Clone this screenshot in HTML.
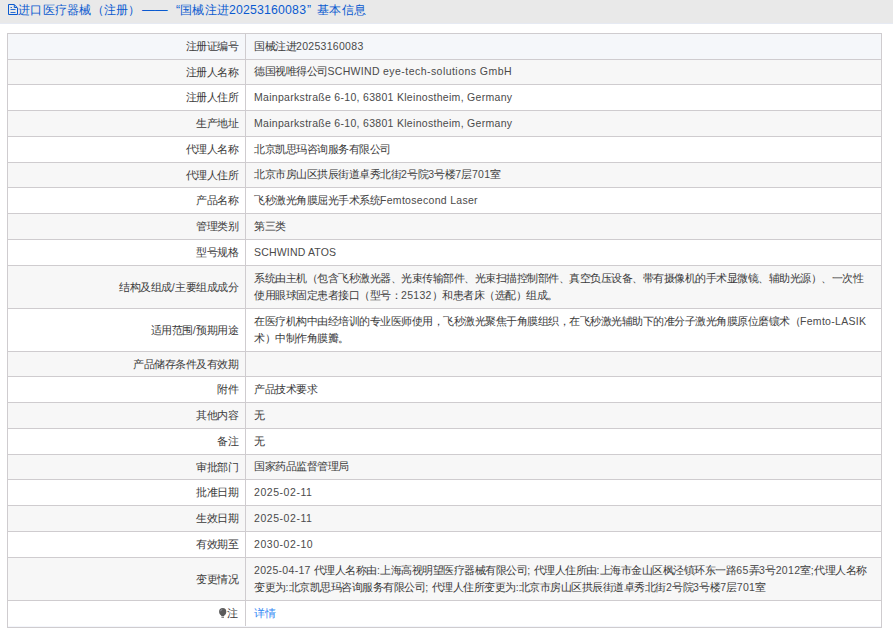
<!DOCTYPE html>
<html><head><meta charset="utf-8"><style>
html,body{margin:0;padding:0;background:#fff;width:893px;height:633px;overflow:hidden;font-family:"Liberation Sans",sans-serif;}
.hdr{position:absolute;left:0;top:0;width:893px;height:23px;background:#e9e9e9;border-bottom:1px solid #e6eaf3;}
.ttl{position:absolute;left:0;top:0;height:23px;line-height:20px;font-size:12.25px;color:#0a5ad0;white-space:nowrap;}
.ts{position:absolute;top:0}
.hc{font-size:12px;letter-spacing:0.25px}
.doc{position:absolute;left:8px;top:4px;width:10px;height:11px;}
.row{position:absolute;left:7px;width:873px;border:1px solid #cfcccf;border-bottom:none;}
.r1{background:#f5f7fa} .g{background:#f7f7f7} .w{background:#fff}
.k{position:absolute;left:0;top:0;width:230px;padding-right:7px;height:100%;display:flex;align-items:center;justify-content:flex-end;font-size:10.5px;letter-spacing:0.3px;color:#4a4a4a;white-space:nowrap;}
.v{position:absolute;left:237px;top:0;right:0;height:100%;border-left:1px solid #cfcccf;padding-left:8px;display:flex;align-items:center;font-size:10.5px;letter-spacing:0.3px;line-height:17.25px;color:#4a4a4a;white-space:nowrap;}
.c{font-size:11px;letter-spacing:-0.5px;color:#3a3a3a}
.bot{position:absolute;left:7px;top:627px;width:875px;height:1px;background:#cfcccf;}
.lnk{color:#3288f4}
.bulb{width:8px;height:10.5px;margin-right:0;position:relative;top:-1px;left:-1px}
.q{display:inline-block;width:12.25px;font-size:12.25px;letter-spacing:0} .ql{text-align:right} .qr{text-align:left}
</style></head><body>
<div class="hdr"><svg class="doc" viewBox="0 0 10 11"><path d="M0.5 0.5H6.2L9.5 3.8V10.5H0.5Z" fill="none" stroke="#0a5ad0" stroke-width="1"/><path d="M6.3 1V3.5H9" fill="none" stroke="#0a5ad0" stroke-width="1"/><path d="M2.5 3.5H4M2.5 5.5H7.5M2.5 8.5H7.5" stroke="#0a5ad0" stroke-width="1" opacity="0.85"/></svg>
<div class="ttl"><span class="ts" style="left:18px"><span class="hc">进口医疗器械（注册）</span></span><span class="ts" style="left:142px;font-size:12.8px">——</span><span class="ts" style="left:176px">“</span><span class="ts" style="left:180px"><span class="hc">国械注进</span><span style="letter-spacing:0.2px">20253160083</span></span><span class="ts" style="left:307px">”</span><span class="ts" style="left:317px"><span class="hc">基本信息</span></span></div></div>
<div class="row r1" style="top:33px;height:25px"><div class="k"><span class="c">注册证编号</span></div><div class="v"><div><span class="c">国械注进</span>20253160083</div></div></div>
<div class="row g" style="top:59px;height:24px"><div class="k"><span class="c">注册人名称</span></div><div class="v"><div><span class="c">德国视唯得公司</span>SCHWIND <span style="letter-spacing:0.46px">eye-tech-solutions GmbH</span></div></div></div>
<div class="row w" style="top:84px;height:25px"><div class="k"><span class="c">注册人住所</span></div><div class="v"><div>Mainparkstraße 6-10, 63801 Kleinostheim, Germany</div></div></div>
<div class="row g" style="top:110px;height:25px"><div class="k"><span class="c">生产地址</span></div><div class="v"><div>Mainparkstraße 6-10, 63801 Kleinostheim, Germany</div></div></div>
<div class="row w" style="top:136px;height:25px"><div class="k"><span class="c">代理人名称</span></div><div class="v"><div><span class="c">北京凯思玛咨询服务有限公司</span></div></div></div>
<div class="row g" style="top:162px;height:24px"><div class="k"><span class="c">代理人住所</span></div><div class="v"><div><span class="c">北京市房山区拱辰街道卓秀北街</span>2<span class="c">号院</span>3<span class="c">号楼</span>7<span class="c">层</span>701<span class="c">室</span></div></div></div>
<div class="row w" style="top:187px;height:25px"><div class="k"><span class="c">产品名称</span></div><div class="v"><div><span class="c">飞秒激光角膜屈光手术系统</span>Femtosecond Laser</div></div></div>
<div class="row g" style="top:213px;height:25px"><div class="k"><span class="c">管理类别</span></div><div class="v"><div><span class="c">第三类</span></div></div></div>
<div class="row w" style="top:239px;height:25px"><div class="k"><span class="c">型号规格</span></div><div class="v"><div><span style="letter-spacing:0.18px">SCHWIND ATOS</span></div></div></div>
<div class="row g" style="top:265px;height:42px"><div class="k"><span class="c">结构及组成</span>/<span class="c">主要组成成分</span></div><div class="v"><div><span class="c">系统由主机（包含飞秒激光器、光束传输部件、光束扫描控制部件、真空负压设备、带有摄像机的手术显微镜、辅助光源）、一次性</span><br><span class="c">使用眼球固定患者接口（型号：</span>25132<span class="c">）和患者床（选配）组成。</span></div></div></div>
<div class="row w" style="top:308px;height:42px"><div class="k"><span class="c">适用范围</span>/<span class="c">预期用途</span></div><div class="v"><div><span class="c">在医疗机构中由经培训的专业医师使用，飞秒激光聚焦于角膜组织，在飞秒激光辅助下的准分子激光角膜原位磨镶术（</span>Femto-LASIK<br><span class="c">术）中制作角膜瓣。</span></div></div></div>
<div class="row g" style="top:351px;height:24px"><div class="k"><span class="c">产品储存条件及有效期</span></div><div class="v"><div></div></div></div>
<div class="row w" style="top:376px;height:25px"><div class="k"><span class="c">附件</span></div><div class="v"><div><span class="c">产品技术要求</span></div></div></div>
<div class="row g" style="top:402px;height:25px"><div class="k"><span class="c">其他内容</span></div><div class="v"><div><span class="c">无</span></div></div></div>
<div class="row w" style="top:428px;height:25px"><div class="k"><span class="c">备注</span></div><div class="v"><div><span class="c">无</span></div></div></div>
<div class="row g" style="top:454px;height:24px"><div class="k"><span class="c">审批部门</span></div><div class="v"><div><span class="c">国家药品监督管理局</span></div></div></div>
<div class="row w" style="top:479px;height:25px"><div class="k"><span class="c">批准日期</span></div><div class="v"><div><span style="letter-spacing:0.55px">2025-02-11</span></div></div></div>
<div class="row g" style="top:505px;height:25px"><div class="k"><span class="c">生效日期</span></div><div class="v"><div><span style="letter-spacing:0.55px">2025-02-11</span></div></div></div>
<div class="row w" style="top:531px;height:25px"><div class="k"><span class="c">有效期至</span></div><div class="v"><div><span style="letter-spacing:0.55px">2030-02-10</span></div></div></div>
<div class="row g" style="top:557px;height:42px"><div class="k"><span class="c">变更情况</span></div><div class="v"><div>2025-04-17 <span class="c">代理人名称由</span>:<span class="c">上海高视明望医疗器械有限公司</span>; <span class="c">代理人住所由</span>:<span class="c">上海市金山区枫泾镇环东一路</span>65<span class="c">弄</span>3<span class="c">号</span>2012<span class="c">室</span>;<span class="c">代理人名称</span><br><span class="c">变更为</span>:<span class="c">北京凯思玛咨询服务有限公司</span>; <span class="c">代理人住所变更为</span>:<span class="c">北京市房山区拱辰街道卓秀北街</span>2<span class="c">号院</span>3<span class="c">号楼</span>7<span class="c">层</span>701<span class="c">室</span></div></div></div>
<div class="row w" style="top:600px;height:26px"><div class="k"><svg class="bulb" viewBox="0 0 8 10.5"><circle cx="3.7" cy="3.7" r="3.6" fill="#5a5a5a"/><path d="M1.1 6.2L2.6 8.3H4.8L6.3 6.2Z" fill="#5a5a5a"/><rect x="2.4" y="8.7" width="2.6" height="1.5" fill="#8a8a8a"/><path d="M1.6 3.2A2.3 2.3 0 0 1 3.4 1.3" stroke="#aab" stroke-width="0.7" fill="none"/></svg><span class="c" style="position:relative;top:-1px;left:-0.5px">注</span></div><div class="v"><div><span class="c lnk">详情</span></div></div></div>
<div class="bot"></div><div style="position:absolute;left:8px;top:626px;width:873px;height:1px;background:#f4f6fb"></div>
</body></html>
